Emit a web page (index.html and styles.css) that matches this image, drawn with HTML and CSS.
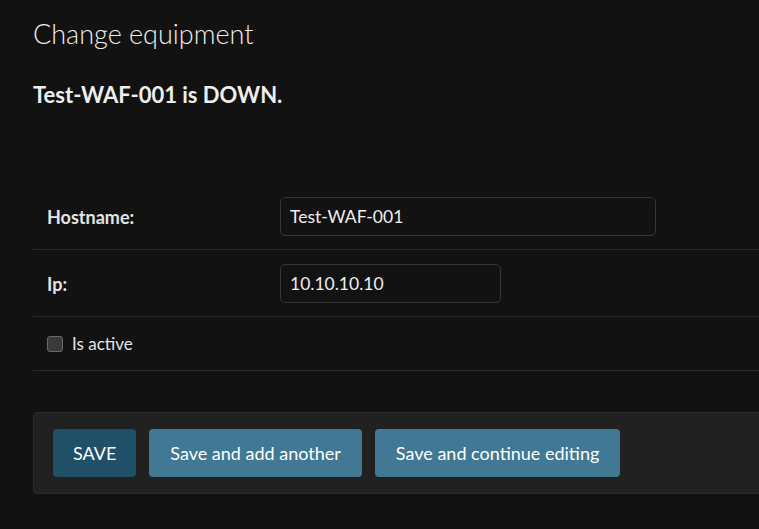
FILE: index.html
```html
<!DOCTYPE html>
<html lang="en">
<head>
    <meta charset="UTF-8">
    <title>Change equipment</title>
    <link rel="stylesheet" href="styles.css">
</head>
<body>
    <div id="content">
        <h1>Change equipment</h1>
        <h2 class="status">Test-WAF-001 is DOWN.</h2>

        <form>
            <fieldset class="module">
                <div class="form-row">
                    <label class="required" for="id_hostname">Hostname:</label>
                    <input type="text" id="id_hostname" class="vTextField" value="Test-WAF-001">
                </div>
                <div class="form-row">
                    <label class="required" for="id_ip">Ip:</label>
                    <input type="text" id="id_ip" class="vIpField" value="10.10.10.10">
                </div>
                <div class="form-row checkbox-row">
                    <input type="checkbox" id="id_is_active">
                    <label class="vCheckboxLabel" for="id_is_active">Is active</label>
                </div>
            </fieldset>

            <div class="submit-row">
                <button type="button" class="default">SAVE</button>
                <button type="button">Save and add another</button>
                <button type="button">Save and continue editing</button>
            </div>
        </form>
    </div>
</body>
</html>
```

FILE: styles.css
```css
body {
    margin: 0;
    background-color: #121212;
    color: #eeeeee;
    font-family: Lato, "Noto Sans", sans-serif;
    overflow: hidden;
}
#content {
    padding: 0 0 0 33px;
    width: 900px;
}
h1 {
    font-size: 27px;
    font-weight: 300;
    margin: 16px 0 0;
    line-height: 36px;
}
.status {
    font-size: 22px;
    font-weight: 700;
    margin: 29px 0 0;
    line-height: 28px;
}
fieldset {
    border: none;
    margin: 74px 0 0;
    padding: 0;
}
.form-row {
    display: flex;
    align-items: center;
    padding: 14px 14px 13px;
    border-bottom: 1px solid #2a2a2a;
}
.form-row label {
    width: 233px;
    font-size: 18px;
    font-weight: 700;
    color: #e4e4e4;
}
.form-row input[type=text] {
    box-sizing: border-box;
    height: 39px;
    padding: 0 9px;
    background: #121212;
    color: #eeeeee;
    border: 1px solid #353535;
    border-radius: 5px;
    font-family: inherit;
    font-size: 17.5px;
}
.vTextField {
    width: 376px;
}
.vIpField {
    width: 221px;
}
.checkbox-row {
    padding: 16px 14px;
}
.checkbox-row input {
    appearance: none;
    width: 16px;
    height: 16px;
    margin: 0 9px 0 0;
    background: #3a3a3a;
    border: 1px solid #6a6a6a;
    border-radius: 3px;
}
.checkbox-row .vCheckboxLabel {
    width: auto;
    font-weight: 400;
    font-size: 17px;
    line-height: 21px;
}
.submit-row {
    margin-top: 41px;
    display: flex;
    gap: 13px;
    padding: 16px 19px;
    background: #212121;
    border: 1px solid #2a2a2a;
    border-radius: 4px;
}
.submit-row button {
    height: 48px;
    padding: 0 21px;
    border: none;
    border-radius: 4px;
    background: #417893;
    color: #ffffff;
    font-family: inherit;
    font-size: 18px;
}
.submit-row button.default {
    padding: 0 20px;
    background: #205067;
}
```
